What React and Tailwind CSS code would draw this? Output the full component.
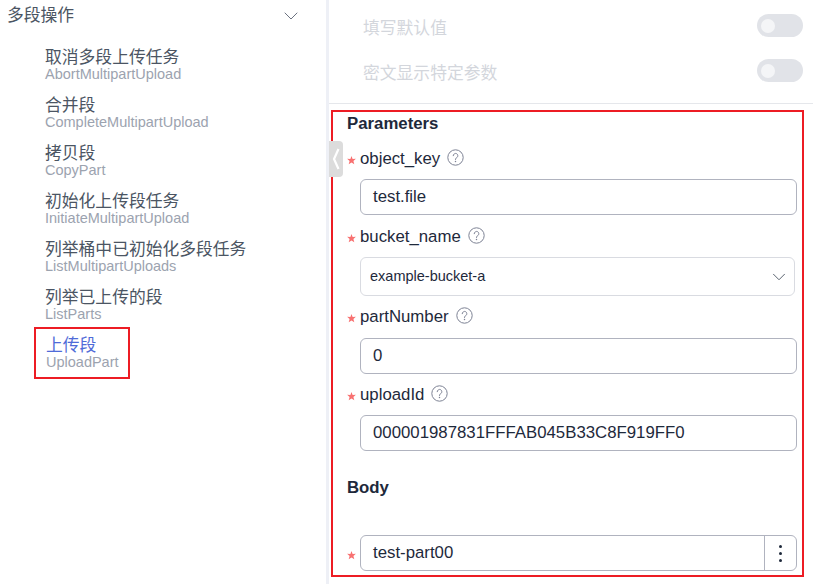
import { ChevronDown } from 'lucide-react'

const FONT = "font-['Liberation_Sans','Noto_Sans_CJK_SC',sans-serif]"

const OPERATIONS = [
  { title: '取消多段上传任务', name: 'AbortMultipartUpload' },
  { title: '合并段', name: 'CompleteMultipartUpload' },
  { title: '拷贝段', name: 'CopyPart' },
  { title: '初始化上传段任务', name: 'InitiateMultipartUpload' },
  { title: '列举桶中已初始化多段任务', name: 'ListMultipartUploads' },
  { title: '列举已上传的段', name: 'ListParts' },
]

function Help() {
  return (
    <svg width="17" height="17" viewBox="0 0 17 17" fill="none" className="ml-[7px] mb-[2px] shrink-0">
      <circle cx="8.5" cy="8.5" r="7.7" stroke="#7d8294" strokeWidth="1" />
      <path d="M6.2 6.7a2.3 2.3 0 1 1 3.6 1.9c-.9.6-1.3 1-1.3 1.9" stroke="#7d8294" strokeWidth="1" strokeLinecap="round" />
      <circle cx="8.5" cy="12.6" r=".75" fill="#7d8294" />
    </svg>
  )
}

function Star() {
  return (
    <span className="w-[13px] h-6 shrink-0 flex items-center">
      <svg width="9" height="9" viewBox="0 0 8 8" className="mt-[4px]">
        <path d="M4 0 5 2.6 7.9 2.5 5.7 4.4 6.5 7.4 4 5.8 1.5 7.4 2.3 4.4.1 2.5 3 2.6Z" fill="#f87171" />
      </svg>
    </span>
  )
}

function Label({ text, className }) {
  return (
    <div className={`flex items-center h-6 text-[16.8px] text-[#1e293b] ${className}`}>
      <Star />
      <span className="pt-[2px]">{text}</span>
      <Help />
    </div>
  )
}

function Input({ value, className }) {
  return (
    <div className={`ml-[13px] w-[437px] h-9 flex items-center px-3 border border-[#b0b3bf] rounded-md text-[16.8px] text-[#1e293b] ${className}`}>
      {value}
    </div>
  )
}

function Toggle() {
  return (
    <div className="w-[46px] h-[23px] rounded-full bg-[#e1e3e8] flex items-center pl-1">
      <div className="w-[14px] h-[14px] rounded-full bg-[#f4f5f7]" />
    </div>
  )
}

function Item({ title, name }) {
  return (
    <div className="h-12 pt-px">
      <div className="text-[16.8px] leading-[22px] text-[#4b5563]">{title}</div>
      <div className="mt-[-3px] text-[14.5px] leading-[16px] text-[#9ca3af]">{name}</div>
    </div>
  )
}

export default function App() {
  return (
    <div className={`w-[813px] h-[584px] overflow-hidden bg-white flex relative ${FONT}`}>
      {/* Operation list */}
      <div className="w-[326px] shrink-0">
        <div className="flex items-center justify-between pl-[7px] pr-[23px] h-[31px] text-[16.8px] text-[#4b5563]">
          <span>多段操作</span>
          <ChevronDown size={24} strokeWidth={1} className="text-[#6b7280]" />
        </div>
        <div className="pl-[45px] pt-[15px]">
          {OPERATIONS.map(op => (
            <Item key={op.name} title={op.title} name={op.name} />
          ))}
        </div>
        <div className="ml-[34px] mt-[-7px] w-24 h-[52px] border-2 border-[#ed1c24] pl-[10px] pt-[6px]">
          <div className="text-[16.8px] leading-[22px] text-[#4f6bd8]">上传段</div>
          <div className="mt-[-3px] text-[14.5px] leading-[16px] text-[#9ca3af]">UploadPart</div>
        </div>
      </div>

      <div className="w-[3px] shrink-0 bg-[#eef0f6]" />

      {/* Request form */}
      <div className="flex-1 min-w-0">
        <div className="h-[104px] pt-[14px] pl-[34px] pr-[10px] border-b border-[#e5e7eb]">
          <div className="flex items-center justify-between h-[23px] text-[16.8px] text-[#d3d6dc]">
            <span className="pt-[6px]">填写默认值</span>
            <Toggle />
          </div>
          <div className="flex items-center justify-between h-[23px] mt-[22px] text-[16.8px] text-[#d3d6dc]">
            <span className="pt-[6px]">密文显示特定参数</span>
            <Toggle />
          </div>
        </div>

        <div className="ml-[2px] mt-[6px] w-[473px] h-[467px] border-2 border-[#ed1c24] pl-[14px]">
          <div className="h-[24px] leading-[24px] text-[16.8px] font-bold text-[#1e293b]">Parameters</div>
          <Label text="object_key" className="mt-[10px]" />
          <Input value="test.file" className="mt-[9px]" />
          <Label text="bucket_name" className="mt-[9px]" />
          <div className="ml-[13px] mt-[9px] w-[435px] h-[39px] flex items-center justify-between pl-[9px] pr-[4px] border border-[#d9dbe1] rounded-md text-[14.5px] text-[#1e293b]">
            <span>example-bucket-a</span>
            <ChevronDown size={22} strokeWidth={1} className="text-[#4b5563]" />
          </div>
          <Label text="partNumber" className="mt-2" />
          <Input value="0" className="mt-[10px]" />
          <Label text="uploadId" className="mt-2" />
          <Input value="000001987831FFFAB045B33C8F919FF0" className="mt-[9px]" />
          <div className="mt-[24px] h-6 leading-[26px] text-[16.8px] font-bold text-[#1e293b]">Body</div>
          <div className="flex items-center mt-[36px]">
            <Star />
            <div className="w-[437px] h-9 flex border border-[#b0b3bf] rounded-md text-[16.8px] text-[#1e293b]">
              <div className="flex-1 flex items-center px-3">test-part00</div>
              <div className="w-8 flex flex-col items-center justify-center gap-[4px] border-l border-[#b0b3bf]">
                <div className="w-[3px] h-[3px] rounded-full bg-[#1e293b]" />
                <div className="w-[3px] h-[3px] rounded-full bg-[#1e293b]" />
                <div className="w-[3px] h-[3px] rounded-full bg-[#1e293b]" />
              </div>
            </div>
          </div>
        </div>
      </div>

      {/* Collapse handle */}
      <div className="absolute left-[329px] top-[141px] w-[14px] h-[36px] rounded-r bg-[#dcdcdc] flex items-center justify-center">
        <svg width="8" height="24" viewBox="0 0 8 24" fill="none">
          <path d="M6.5 2 2 12l4.5 10" stroke="#ffffff" strokeWidth="2.2" />
        </svg>
      </div>
    </div>
  )
}
